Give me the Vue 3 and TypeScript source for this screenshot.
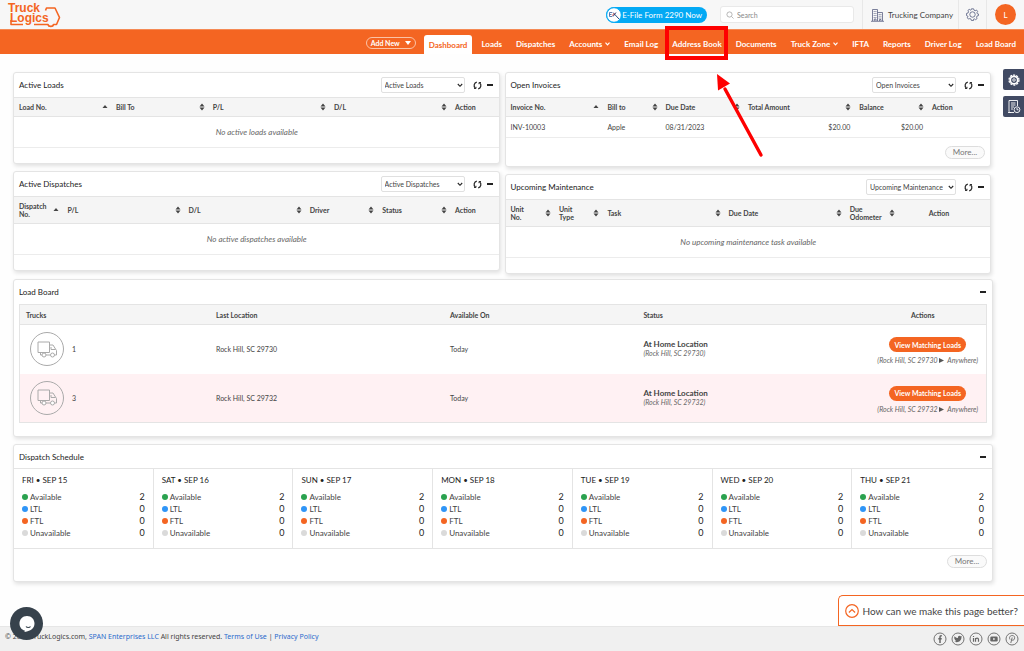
<script setup lang="ts">
import { ref } from 'vue'

interface NavItem { label: string; active?: boolean; menu?: boolean; marked?: boolean }
interface Column { label: string; width: number; sort?: 'asc' | 'both'; align?: 'right' | 'center' }
interface Panel {
  id: string
  title: string
  options: string
  columns: Column[]
  rows: string[][]
  empty?: string
  more?: boolean
}

const nav: NavItem[] = [
  { label: 'Dashboard', active: true },
  { label: 'Loads' },
  { label: 'Dispatches' },
  { label: 'Accounts', menu: true },
  { label: 'Email Log' },
  { label: 'Address Book', marked: true },
  { label: 'Documents' },
  { label: 'Truck Zone', menu: true },
  { label: 'IFTA' },
  { label: 'Reports' },
  { label: 'Driver Log' },
  { label: 'Load Board' },
]

const columns: Panel[][] = [
  [
    {
      id: 'loads', title: 'Active Loads', options: 'Active Loads', rows: [], empty: 'No active loads available',
      columns: [
        { label: 'Load No.', width: 20, sort: 'asc' },
        { label: 'Bill To', width: 20, sort: 'both' },
        { label: 'P/L', width: 25, sort: 'both' },
        { label: 'D/L', width: 25, sort: 'both' },
        { label: 'Action', width: 10 },
      ],
    },
    {
      id: 'dispatches', title: 'Active Dispatches', options: 'Active Dispatches', rows: [], empty: 'No active dispatches available',
      columns: [
        { label: 'Dispatch\nNo.', width: 10, sort: 'asc' },
        { label: 'P/L', width: 25, sort: 'both' },
        { label: 'D/L', width: 25, sort: 'both' },
        { label: 'Driver', width: 15, sort: 'both' },
        { label: 'Status', width: 15, sort: 'both' },
        { label: 'Action', width: 10 },
      ],
    },
  ],
  [
    {
      id: 'invoices', title: 'Open Invoices', options: 'Open Invoices', more: true,
      rows: [['INV-10003', 'Apple', '08/31/2023', '$20.00', '$20.00', '']],
      columns: [
        { label: 'Invoice No.', width: 20, sort: 'asc' },
        { label: 'Bill to', width: 12, sort: 'both' },
        { label: 'Due Date', width: 17, sort: 'both' },
        { label: 'Total Amount', width: 23, sort: 'both', align: 'right' },
        { label: 'Balance', width: 15, sort: 'both', align: 'right' },
        { label: 'Action', width: 13 },
      ],
    },
    {
      id: 'maintenance', title: 'Upcoming Maintenance', options: 'Upcoming Maintenance', rows: [], empty: 'No upcoming maintenance task available',
      columns: [
        { label: 'Unit\nNo.', width: 10, sort: 'both' },
        { label: 'Unit\nType', width: 10, sort: 'both' },
        { label: 'Task', width: 25, sort: 'both' },
        { label: 'Due Date', width: 25, sort: 'both' },
        { label: 'Due\nOdometer', width: 11, sort: 'both' },
        { label: 'Action', width: 19, align: 'center' },
      ],
    },
  ],
]

const trucks = [
  { no: '1', place: 'Rock Hill, SC 29730' },
  { no: '3', place: 'Rock Hill, SC 29732' },
]

const days = ['FRI • SEP 15', 'SAT • SEP 16', 'SUN • SEP 17', 'MON • SEP 18', 'TUE • SEP 19', 'WED • SEP 20', 'THU • SEP 21']
const counts = [
  { label: 'Available', kind: 'available', n: 2 },
  { label: 'LTL', kind: 'ltl', n: 0 },
  { label: 'FTL', kind: 'ftl', n: 0 },
  { label: 'Unavailable', kind: 'unavailable', n: 0 },
]
const search = ref('')
</script>

<template>
  <div class="page">
    <header class="top">
      <a href="#" class="logo" aria-label="TruckLogics">
        <svg width="56" height="29" viewBox="0 0 56 29">
          <g fill="#f46522" font-family="Liberation Sans, sans-serif" font-weight="700" font-size="12">
            <text x="1" y="12">Truck</text>
            <text x="3" y="22">Logics</text>
          </g>
          <path d="M38.500 10.500L39.500 8H48L52.500 17.500L49.500 24.500H46.500C46 27 41.500 27 41 24.500H27M16 24.500H4V20" fill="none" stroke="#f46522" stroke-width="1.600" stroke-linejoin="round" />
        </svg>
      </a>
      <a href="#" class="efile">
        <svg width="16" height="16" viewBox="0 0 16 16">
          <circle cx="8" cy="8" r="7.300" fill="#fff" stroke="#03a9f4" />
          <path d="M6 5.500H3.500V9.500H6M3.500 7.500H5.500" fill="none" stroke="#4a6ea8" stroke-width=".9" />
          <path d="M7 5.500L13 12M7 9.500L10 5.500" stroke="#2b4c80" stroke-width="1" />
          <path d="M6 8.500L8.500 6.500" stroke="#e2483d" stroke-width=".9" />
        </svg>
        <span>E-File Form 2290 Now</span>
      </a>
      <label class="search">
        <svg width="8" height="8" viewBox="0 0 8 8" fill="none" stroke="#999"><circle cx="3.500" cy="3.500" r="2.600" stroke-width=".7" /><path d="M5.500 5.500L7.500 7.500" stroke-width=".7" /></svg>
        <input v-model="search" type="text" placeholder="Search" aria-label="Search">
      </label>
      <a href="#" class="company">
        <svg width="13" height="14" viewBox="0 0 13 14" fill="none" stroke="#5b6183" stroke-width=".8">
          <path d="M1.500 13V1.500H6.500V13M6.500 4.500H11.500V13M0 13.300H13M3.300 13V11H5V13M8.500 13V11.500H10V13" />
          <path d="M2.700 3.500H5.500M2.700 5.500H5.500M2.700 7.500H5.500M2.700 9.500H5.500M7.700 6.500H10.500M7.700 8.300H10.500M7.700 10.100H10.500" stroke-dasharray="1 .7" />
        </svg>
        <span>Trucking Company</span>
      </a>
      <button class="gear" type="button" aria-label="Settings">
        <svg width="13" height="13" viewBox="0 0 24 24" fill="none" stroke="#555e80" stroke-width="1.500">
          <path d="M10 1.500H14L14.800 4L17 5L19.500 3.800L21.500 6.500L20 9L20.800 10.500L23 11V14L20.500 14.700L19.500 17L20.500 19.500L17.700 21.500L15.300 20L14 20.600V23H10L9.300 20.500L7 19.500L4.500 20.500L2.500 18L3.800 15.500L1 14V10L3.700 9.300L4.700 7L3.500 4.500L6 2.500L8.500 4L9.500 3.500Z" />
          <circle cx="12" cy="12" r="5" />
        </svg>
      </button>
      <div class="account"><button class="avatar" type="button">L</button></div>
    </header>

    <nav class="bar">
      <button class="add" type="button">Add New <svg width="6" height="4" viewBox="0 0 6 4"><path d="M0 0H6L3 4Z" fill="#fff" /></svg></button>
      <a v-for="item in nav" :key="item.label" href="#" :class="['item', { active: item.active }]">
        {{ item.label }}
        <svg v-if="item.menu" class="caret" width="5" height="4" viewBox="0 0 5 4"><path d="M.5 .7L2.500 2.800L4.500 .7" fill="none" stroke="#fff" stroke-width="1.200" /></svg>
        <span v-if="item.marked" class="mark">
          <svg class="arrow" width="54" height="92" viewBox="0 0 54 92">
            <path d="M48 86L12 20" stroke="#fe0000" stroke-width="3.400" stroke-linecap="round" /><path d="M4 5L17 14.500L5 21.500Z" fill="#fe0000" />
          </svg>
        </span>
      </a>
    </nav>

    <main class="content">
      <div class="split">
        <div v-for="(group, g) in columns" :key="g" class="stack">
          <section v-for="p in group" :key="p.id" class="panel">
            <div class="panel-head">
              <h2>{{ p.title }}</h2>
              <span class="pick">
                <select :aria-label="p.title + ' view'"><option>{{ p.options }}</option></select>
                <svg width="6" height="5" viewBox="0 0 6 5"><path d="M.8 1L3 3.300L5.200 1" fill="none" stroke="#222" stroke-width="1.100" /></svg>
              </span>
              <button class="icon" type="button" aria-label="Refresh">
                <svg width="9" height="9" viewBox="0 0 9 9" fill="none" stroke="#222" stroke-width="1.200">
                  <path d="M3.800 1.200A3.400 3.400 0 0 0 2.300 7.100M5.200 7.800A3.400 3.400 0 0 0 6.700 1.900" /><path d="M1 7.500H3V5.800M8 1.500H6V3.200" stroke-width=".9" />
                </svg>
              </button>
              <button class="icon minus" type="button" aria-label="Collapse"><i></i></button>
            </div>
            <table class="grid">
              <colgroup><col v-for="c in p.columns" :key="c.label" :style="{ width: c.width + '%' }"></colgroup>
              <thead>
                <tr>
                  <th v-for="c in p.columns" :key="c.label" :class="c.align === 'center' && 'center'">
                    <div class="th">
                      <span>{{ c.label }}</span>
                      <svg v-if="c.sort" width="6" height="8" viewBox="0 0 6 8" fill="#444">
                        <path v-if="c.sort === 'asc'" d="M.5 5H5.500L3 2Z" />
                        <path v-else d="M.5 3.400H5.500L3 .5ZM.5 4.600H5.500L3 7.500Z" />
                      </svg>
                    </div>
                  </th>
                </tr>
              </thead>
              <tbody>
                <tr v-for="(r, i) in p.rows" :key="i">
                  <td v-for="(v, j) in r" :key="j" :class="p.columns[j].align">{{ v }}</td>
                </tr>
                <tr v-if="p.empty"><td class="empty" :colspan="p.columns.length">{{ p.empty }}</td></tr>
              </tbody>
            </table>
            <div :class="['panel-foot', { roomy: p.more }]"><button v-if="p.more" class="more" type="button">More...</button></div>
          </section>
        </div>
      </div>

      <section class="panel board">
        <div class="panel-head">
          <h2>Load Board</h2>
          <button class="icon minus" type="button" aria-label="Collapse"><i></i></button>
        </div>
        <table class="trucks">
          <thead><tr><th class="c1">Trucks</th><th class="c2">Last Location</th><th class="c3">Available On</th><th class="c4">Status</th><th class="c5">Actions</th></tr></thead>
          <tbody>
            <tr v-for="t in trucks" :key="t.no">
              <td>
                <div class="truck">
                  <span class="ring">
                    <svg width="20" height="17" viewBox="0 0 20 17" fill="none" stroke="#aaa" stroke-width="1">
                      <path d="M1 1H12.500V11.500H1Z" /><path d="M12.500 4H16L18.500 8L19.500 9.500V14H17.500M3.500 11.500V14H5M9 14H13.500M14 6V8.500H18.500" />
                      <circle cx="7" cy="14" r="2" fill="#fff" /><circle cx="15.500" cy="14" r="2" fill="#fff" />
                    </svg>
                  </span>
                  {{ t.no }}
                </div>
              </td>
              <td>{{ t.place }}</td>
              <td>Today</td>
              <td><strong>At Home Location</strong><em>({{ t.place }})</em></td>
              <td class="act"><button class="match" type="button">View Matching Loads</button><em>({{ t.place }} <svg width="5" height="5" viewBox="0 0 5 5"><path d="M0 0L5 2.500L0 5Z" fill="#555" /></svg>&nbsp; Anywhere)</em></td>
            </tr>
          </tbody>
        </table>
      </section>

      <section class="panel">
        <div class="panel-head short">
          <h2>Dispatch Schedule</h2>
          <button class="icon minus" type="button" aria-label="Collapse"><i></i></button>
        </div>
        <div class="days">
          <div v-for="d in days" :key="d" class="day">
            <h3>{{ d }}</h3>
            <ul>
              <li v-for="c in counts" :key="c.kind"><i :class="['dot', c.kind]"></i><span>{{ c.label }}</span><b>{{ c.n }}</b></li>
            </ul>
          </div>
        </div>
        <div class="panel-foot schedule"><button class="more" type="button">More...</button></div>
      </section>
    </main>

    <footer class="foot">
      <p>© 2023 TruckLogics.com, <a href="#">SPAN Enterprises LLC</a> All rights reserved. <a href="#">Terms of Use</a> | <a href="#">Privacy Policy</a></p>
      <div class="social">
        <a href="#" aria-label="Facebook"><svg viewBox="0 0 14 14"><circle cx="7" cy="7" r="6" /><path d="M8.800 3.800H8C7.200 3.800 7 4.300 7 5V11M5.300 6.700H8.700" stroke-width="1.500" /></svg></a>
        <a href="#" aria-label="Twitter"><svg viewBox="0 0 14 14"><circle cx="7" cy="7" r="6" /><path class="solid" d="M3.500 4.200C4.500 5.400 5.600 5.900 6.900 6C6.600 3.800 9 3.200 9.900 4.400L11 4L10.500 5C10.500 9.500 6.500 11.200 3.200 9.500C4.200 9.500 4.800 9.300 5.200 8.900C4.300 8.700 3.900 8.200 3.900 7.600C3.300 7.100 3.100 5.500 3.500 4.200Z" /></svg></a>
        <a href="#" aria-label="LinkedIn"><svg viewBox="0 0 14 14"><circle cx="7" cy="7" r="6" /><path d="M4.500 6V9.800M6.500 9.800V6M6.500 7.500C6.700 5.700 9.500 5.700 9.500 7.500V9.800M4.500 4V5" stroke-width="1.200" /></svg></a>
        <a href="#" aria-label="YouTube"><svg viewBox="0 0 14 14"><circle cx="7" cy="7" r="6" /><rect class="solid" x="3.300" y="4.500" width="7.400" height="5" rx="1.300" /><path d="M6.300 5.800V8.200L8.300 7Z" fill="#fff" stroke="none" /></svg></a>
        <a href="#" aria-label="Pinterest"><svg viewBox="0 0 14 14"><circle cx="7" cy="7" r="6" /><path d="M5 7.500C3.700 5.200 5.300 3.500 7.200 3.500C9.500 3.500 10 5.300 9.400 6.900C8.900 8.400 7.400 8.600 6.700 7.700M7.200 5.500L5.800 11" /></svg></a>
      </div>
    </footer>

    <aside class="side">
      <button type="button" aria-label="Dashboard settings">
        <svg width="12" height="12" viewBox="0 0 24 24" fill="none" stroke="#fff">
          <circle cx="12" cy="12" r="10" stroke-width="2.500" stroke-dasharray="4.200 2.083" /><circle cx="12" cy="12" r="7.500" stroke-width="3.500" /><circle cx="12" cy="12" r="2.500" stroke-width="1.800" />
        </svg>
      </button>
      <button type="button" aria-label="Reports history">
        <svg width="14" height="15" viewBox="0 0 14 15" fill="none" stroke="#fff" stroke-width=".9">
          <path d="M7 13.500H3C2 13.500 2 12 2 12V1.500H10.500V7M1 13.500H4M4 4H8.500M4 6H8.500M4 8H7M4 10H6" /><circle cx="10" cy="10.700" r="2.900" /><path d="M10 9V10.800H11.500" />
        </svg>
      </button>
    </aside>

    <button class="feedback" type="button">
      <svg width="14" height="14" viewBox="0 0 14 14" fill="none" stroke="#f46522" stroke-width="1.200"><circle cx="7" cy="7" r="6.300" /><path d="M3.900 8.500L7 5.500L10.100 8.500" /></svg>
      How can we make this page better?
    </button>

    <button class="chat" type="button" aria-label="Chat">
      <svg width="18" height="18" viewBox="0 0 18 18"><path d="M9 1C13.500 1 16.500 4.500 16.500 8.500C16.500 12.500 13.500 16 6.500 17L6.800 15.500C3.500 14.800 1.500 12 1.500 8.500C1.500 4.500 4.500 1 9 1Z" fill="#fff" /><path d="M8 11.500C9 12.800 11.500 12.800 12.500 11.500" fill="none" stroke="#37424c" stroke-width="1.200" /></svg>
    </button>
  </div>
</template>

<style>
body { margin: 0; background: #fefefe; }
</style>

<style scoped>
* { box-sizing: border-box; }
.page { min-height: 100vh; display: flex; flex-direction: column; font: 7px/10px Lato, sans-serif; color: #444; }
button, input, select { font: inherit; color: inherit; }
button { padding: 0; border: 0; background: none; cursor: pointer; }
a { color: inherit; text-decoration: none; }
svg { flex: none; }
h2, h3, p, ul { margin: 0; padding: 0; }

.top { height: 29px; background: #f7f7f7; display: flex; align-items: center; }
.logo { display: flex; margin-left: 7px; margin-right: auto; }
.efile { height: 16px; display: flex; align-items: center; padding-right: 5px; margin-right: 13px; border-radius: 8px; background: #03a9f4; color: #fff; font-size: 8px; }
.search { width: 134px; height: 17px; margin-right: 8px; padding: 0 5px; display: flex; align-items: center; gap: 3px; border: 1px solid #e9e9e9; border-radius: 3px; background: #fff; }
.search input { flex: 1; min-width: 0; border: 0; outline: 0; padding: 0; background: none; }
.search input::placeholder { color: #888; opacity: 1; }
.company { align-self: stretch; width: 96px; display: flex; align-items: center; gap: 4px; padding-left: 8px; border-left: 1px solid #e8e8e8; font-size: 8px; white-space: nowrap; }
.gear { align-self: stretch; width: 28px; display: flex; align-items: center; justify-content: center; border-left: 1px solid #e8e8e8; }
.account { align-self: stretch; display: flex; align-items: center; padding: 0 8px; border-left: 1px solid #e8e8e8; }
.avatar { width: 21px; height: 21px; border-radius: 50%; background: #f46522; color: #fff; font-size: 8px; }

.bar { height: 25px; padding: 0 8px; display: flex; align-items: flex-end; justify-content: flex-end; gap: 14px; background: #f46522; border-top: 1px solid #f58a55; color: #fff; font-size: 8px; font-weight: 700; white-space: nowrap; }
.add { width: 50px; height: 12px; margin-bottom: 5px; margin-right: -6px; display: flex; align-items: center; justify-content: center; gap: 5px; border: 1px solid #fbc3a6; border-radius: 6px; font-size: 7px; font-weight: 700; }
.item { position: relative; height: 19px; padding-bottom: 2px; display: flex; align-items: center; gap: 3px; }
.item.active { padding: 0 5px; margin-right: -5px; background: #fff; color: #f46522; border-radius: 3px 3px 0 0; }
.mark { position: absolute; top: -9px; bottom: -6px; left: -7px; right: -6px; border: 4px solid #fe0000; }
.arrow { position: absolute; left: 44px; top: 39px; z-index: 3; }

.content { padding: 18px 31px 8px 13px; display: flex; flex-direction: column; gap: 7px; }
.split { display: grid; grid-template-columns: 1fr 1fr; gap: 5px; margin-right: 2px; margin-bottom: -2px; align-items: start; }
.stack { display: flex; flex-direction: column; gap: 7px; }
.panel { background: #fff; border: 1px solid #e4e4e4; border-radius: 3px; box-shadow: 1px 2px 4px rgba(0, 0, 0, .12); }
.panel-head { height: 24px; display: flex; align-items: center; padding: 0 6px 0 5px; }
.panel-head.short { height: 23px; }
.panel-head h2 { margin-right: auto; font-size: 8px; font-weight: 400; color: #222; }
.pick { position: relative; display: flex; margin-right: 8px; }
.pick select { height: 16px; min-width: 84px; appearance: none; border: 1px solid #e0e0e0; border-radius: 2px; background: #fff; padding: 0 12px 0 3px; }
.pick svg { position: absolute; right: 2px; top: 6px; pointer-events: none; }
.icon { display: flex; align-items: center; justify-content: center; width: 9px; height: 10px; }
.icon.minus { margin-left: 5px; width: 6px; }
.minus i { width: 6px; height: 2px; background: #222; }

table { width: 100%; border-collapse: collapse; table-layout: fixed; }
th { text-align: left; font-weight: 700; color: #444; }
.grid thead tr { background: #f5f5f5; border-top: 1px solid #e4e4e4; border-bottom: 1px solid #e4e4e4; }
.grid th { padding: 5px 3px 5px 5px; line-height: 8px; }
.th { display: flex; align-items: center; justify-content: space-between; gap: 4px; white-space: pre-line; }
.center .th { justify-content: center; padding-right: 12px; }
.grid td { height: 21px; padding: 0 4px 0 5px; border-bottom: 1px solid #ececec; }
.grid td.right { text-align: right; }
.grid td.empty { height: 31px; text-align: center; font-style: italic; font-size: 8px; color: #666; }
.panel-foot { min-height: 15px; display: flex; justify-content: flex-end; align-items: center; padding: 0 5px; }
.panel-foot.roomy { min-height: 28px; }
.panel-foot.schedule { height: 32px; padding-bottom: 8px; }
.more { width: 40px; height: 13px; border: 1px solid #ddd; border-radius: 7px; background: #fafafa; color: #777; font-size: 8px; }

.board { padding-bottom: 13px; }
.trucks { margin: 0 5px; border: 1px solid #e4e4e4; width: calc(100% - 10px); }
.trucks th { height: 20px; padding: 0 6px; background: #f5f5f5; border-bottom: 1px solid #e4e4e4; }
.trucks td { height: 49px; padding: 0 6px; }
.trucks tbody tr:nth-child(2) { background: #fff1f3; }
.c1 { width: 19.7%; }
.c2 { width: 24.2%; }
.c3 { width: 20%; }
.c4 { width: 24%; }
.trucks th.c5 { text-align: center; padding-right: 16px; }
.trucks strong, .trucks em { display: block; }
.trucks strong { font-size: 8px; line-height: 9px; }
.trucks em { color: #666; line-height: 9px; white-space: nowrap; }
.truck { display: flex; align-items: center; gap: 8px; padding-left: 4px; }
.ring { width: 34px; height: 34px; display: flex; align-items: center; justify-content: center; border: 1px solid #aaa; border-radius: 50%; }
.trucks .act { padding-top: 4px; text-align: center; }
.match { height: 15px; padding: 0 5px; margin-bottom: 4px; border-radius: 8px; background: #f46522; color: #fff; font-weight: 700; white-space: nowrap; }

.days { display: grid; grid-template-columns: repeat(7, 1fr); border-top: 1px solid #e4e4e4; border-bottom: 1px solid #e4e4e4; }
.day { padding: 6px 8px 9px; border-right: 1px solid #e4e4e4; }
.day:last-child { border-right: 0; }
.day h3 { margin-bottom: 6px; font-size: 8px; font-weight: 400; color: #222; }
.day ul { list-style: none; }
.day li { display: flex; align-items: center; height: 12px; font-size: 8px; }
.day b { margin-left: auto; font-weight: 400; font-size: 9px; color: #222; }
.dot { width: 6px; height: 6px; margin-right: 2px; border-radius: 50%; }
.available { background: #2aa24f; }
.ltl { background: #2f95f7; }
.ftl { background: #f46522; }
.unavailable { background: #dadada; }

.foot { margin-top: auto; height: 25px; padding: 0 5px; display: flex; justify-content: space-between; background: #f0f0f0; border-top: 1px solid #e6e6e6; font-family: "Noto Sans", sans-serif; }
.foot p { padding-top: 5px; }
.foot p a { color: #2a6bcc; }
.social { display: flex; align-items: center; gap: 4px; }
.social svg { display: block; width: 14px; height: 14px; fill: none; stroke: #666; stroke-width: .9; }
.social .solid { fill: #666; stroke: none; }

.side { position: fixed; right: 0; top: 69px; display: flex; flex-direction: column; gap: 6px; }
.side button { width: 21px; height: 21px; display: flex; align-items: center; justify-content: center; background: #414a63; border-radius: 2px 0 0 2px; }
.feedback { position: fixed; right: 0; bottom: 25px; height: 31px; padding: 0 6px; display: flex; align-items: center; gap: 4px; border: 1px solid #f46522; border-right: 0; border-radius: 5px 0 0 0; background: #fff; font-size: 10px; white-space: nowrap; }
.chat { position: fixed; left: 10px; bottom: 11px; width: 33px; height: 33px; display: flex; align-items: center; justify-content: center; border-radius: 50%; background: #37424c; }
</style>
